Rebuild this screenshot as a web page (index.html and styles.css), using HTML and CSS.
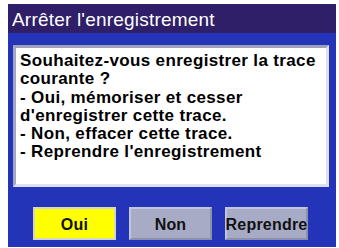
FILE: index.html
```html
<!DOCTYPE html>
<html>
<head>
<meta charset="utf-8">
<link rel="stylesheet" href="styles.css">
</head>
<body>
<div class="screen">
  <div class="titlebar">Arrêter l'enregistrement</div>
  <div class="content">
    <div class="message">
      <div class="line">Souhaitez-vous enregistrer la trace</div>
      <div class="line">courante ?</div>
      <div class="line">- Oui, mémoriser et cesser</div>
      <div class="line">d'enregistrer cette trace.</div>
      <div class="line">- Non, effacer cette trace.</div>
      <div class="line">- Reprendre l'enregistrement</div>
    </div>
    <div class="buttons">
      <div class="btn btn-yes">Oui</div>
      <div class="btn">Non</div>
      <div class="btn">Reprendre</div>
    </div>
  </div>
</div>
</body>
</html>
```
FILE: styles.css
```css
html, body {
  margin: 0;
  padding: 0;
  background: #ffffff;
}
body {
  width: 339px;
  height: 248px;
  overflow: hidden;
  font-family: "Liberation Sans", Arial, sans-serif;
}
.screen {
  margin: 4px 0 0 8px;
  width: 328px;
  height: 243px;
  background: #2334b8;
  display: flex;
  flex-direction: column;
}
.titlebar {
  height: 29px;
  background: #2f1e68;
  color: #ffffff;
  font-size: 19px;
  letter-spacing: 0.2px;
  line-height: 26px;
  padding: 3px 0 0 4px;
  box-sizing: border-box;
  white-space: nowrap;
}
.content {
  flex: 1;
  display: flex;
  flex-direction: column;
  padding: 12px 0 0 5px;
}
.message {
  background: #ffffff;
  width: 316px;
  height: 142px;
  box-sizing: border-box;
  border-top: 3px solid #9ea2b8;
  border-left: 3px solid #a4a8c0;
  border-right: 3px solid #dce0f2;
  border-bottom: 3px solid #dce0f2;
  padding: 4px 0 0 4px;
  font-size: 17px;
  font-weight: bold;
  letter-spacing: 0.35px;
  line-height: 18.3px;
  color: #000000;
  white-space: nowrap;
  overflow: hidden;
}
.buttons {
  display: flex;
  gap: 13px;
  margin-top: 20px;
  padding-left: 20px;
}
.btn {
  width: 83px;
  height: 33px;
  box-sizing: border-box;
  background: #a7abc6;
  border: 2px solid #c2c6da;
  border-bottom-color: #8c90aa;
  border-right-color: #8c90aa;
  display: flex;
  align-items: center;
  justify-content: center;
  padding-top: 2px;
  font-size: 16px;
  font-weight: bold;
  letter-spacing: 0.2px;
  color: #111111;
  white-space: nowrap;
}
.btn-yes {
  background: #ffff00;
  border-color: #d6d6c6;
}
```
